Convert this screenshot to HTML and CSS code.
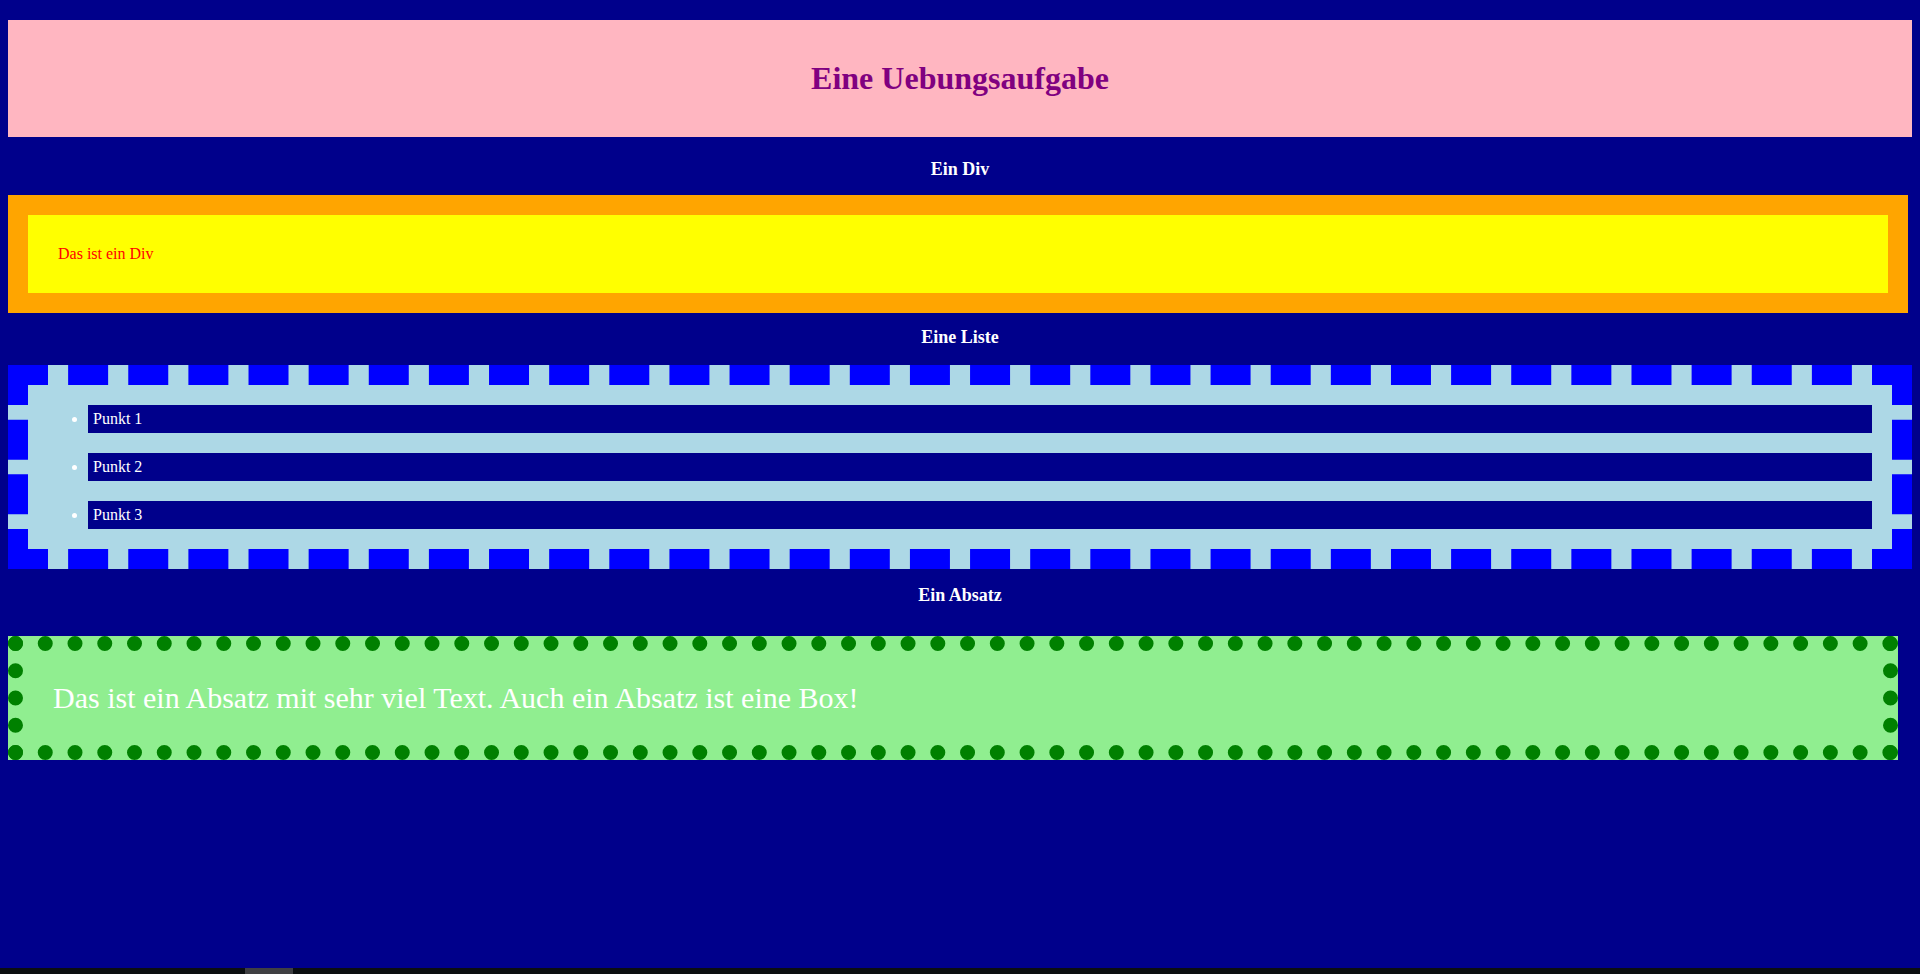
FILE: index.html
```html
<!DOCTYPE html>
<html lang="de">
<head>
<meta charset="utf-8">
<title>Eine Uebungsaufgabe</title>
<link rel="stylesheet" href="styles.css">
</head>
<body>
<main class="page">
  <h1 class="title">Eine Uebungsaufgabe</h1>
  <h3 class="section-head head-div">Ein Div</h3>
  <div class="box-div">Das ist ein Div</div>
  <h3 class="section-head head-list">Eine Liste</h3>
  <ul class="box-list">
    <li class="item">Punkt 1</li>
    <li class="item">Punkt 2</li>
    <li class="item">Punkt 3</li>
  </ul>
  <h3 class="section-head head-para">Ein Absatz</h3>
  <p class="box-para">Das ist ein Absatz mit sehr viel Text. Auch ein Absatz ist eine Box!</p>
</main>
<div class="hscroll"><div class="hscroll-thumb"></div></div>
</body>
</html>
```

FILE: styles.css
```css
html, body {
  background: #00008b;
}
body {
  margin: 20px 8px 0;
  font-family: "Liberation Serif", "Times New Roman", serif;
  font-size: 16px;
  color: #ffffff;
}
.page {
  display: flex;
  flex-direction: column;
  align-items: flex-start;
}
.title {
  align-self: stretch;
  margin: 0;
  padding: 40px 0;
  background: #ffb6c1;
  color: #800080;
  font-size: 32px;
  line-height: 37px;
  font-weight: bold;
  text-align: center;
}
.section-head {
  align-self: stretch;
  font-size: 18px;
  line-height: 20px;
  font-weight: bold;
  text-align: center;
  color: #ffffff;
}
.head-div { margin: 22px 0 16px; }
.head-list { margin: 14px 0 18px; }
.head-para { margin: 16px 0 31px; }

.box-div {
  width: 1800px;
  border: 20px solid #ffa500;
  background: #ffff00;
  padding: 30px;
  line-height: 18px;
  color: #ff0000;
}
.box-list {
  align-self: stretch;
  margin: 0;
  border: 20px dashed #0000ff;
  background: #add8e6;
  padding: 20px 20px 20px 60px;
  display: flex;
  flex-direction: column;
  gap: 20px;
}
.item {
  display: list-item;
  list-style: disc outside;
  background: #00008b;
  color: #ffffff;
  padding: 5px;
  line-height: 18px;
}
.box-para {
  margin: 0;
  width: 1800px;
  border: 15px dotted #008000;
  background: #90ee90;
  padding: 30px;
  font-size: 30px;
  line-height: 34px;
  color: #ffffff;
}
.hscroll {
  position: fixed;
  left: 0;
  right: 0;
  bottom: 0;
  height: 6px;
  background: #0b0e10;
}
.hscroll-thumb {
  margin-left: 245px;
  width: 48px;
  height: 6px;
  background: #3f3f42;
}
```
